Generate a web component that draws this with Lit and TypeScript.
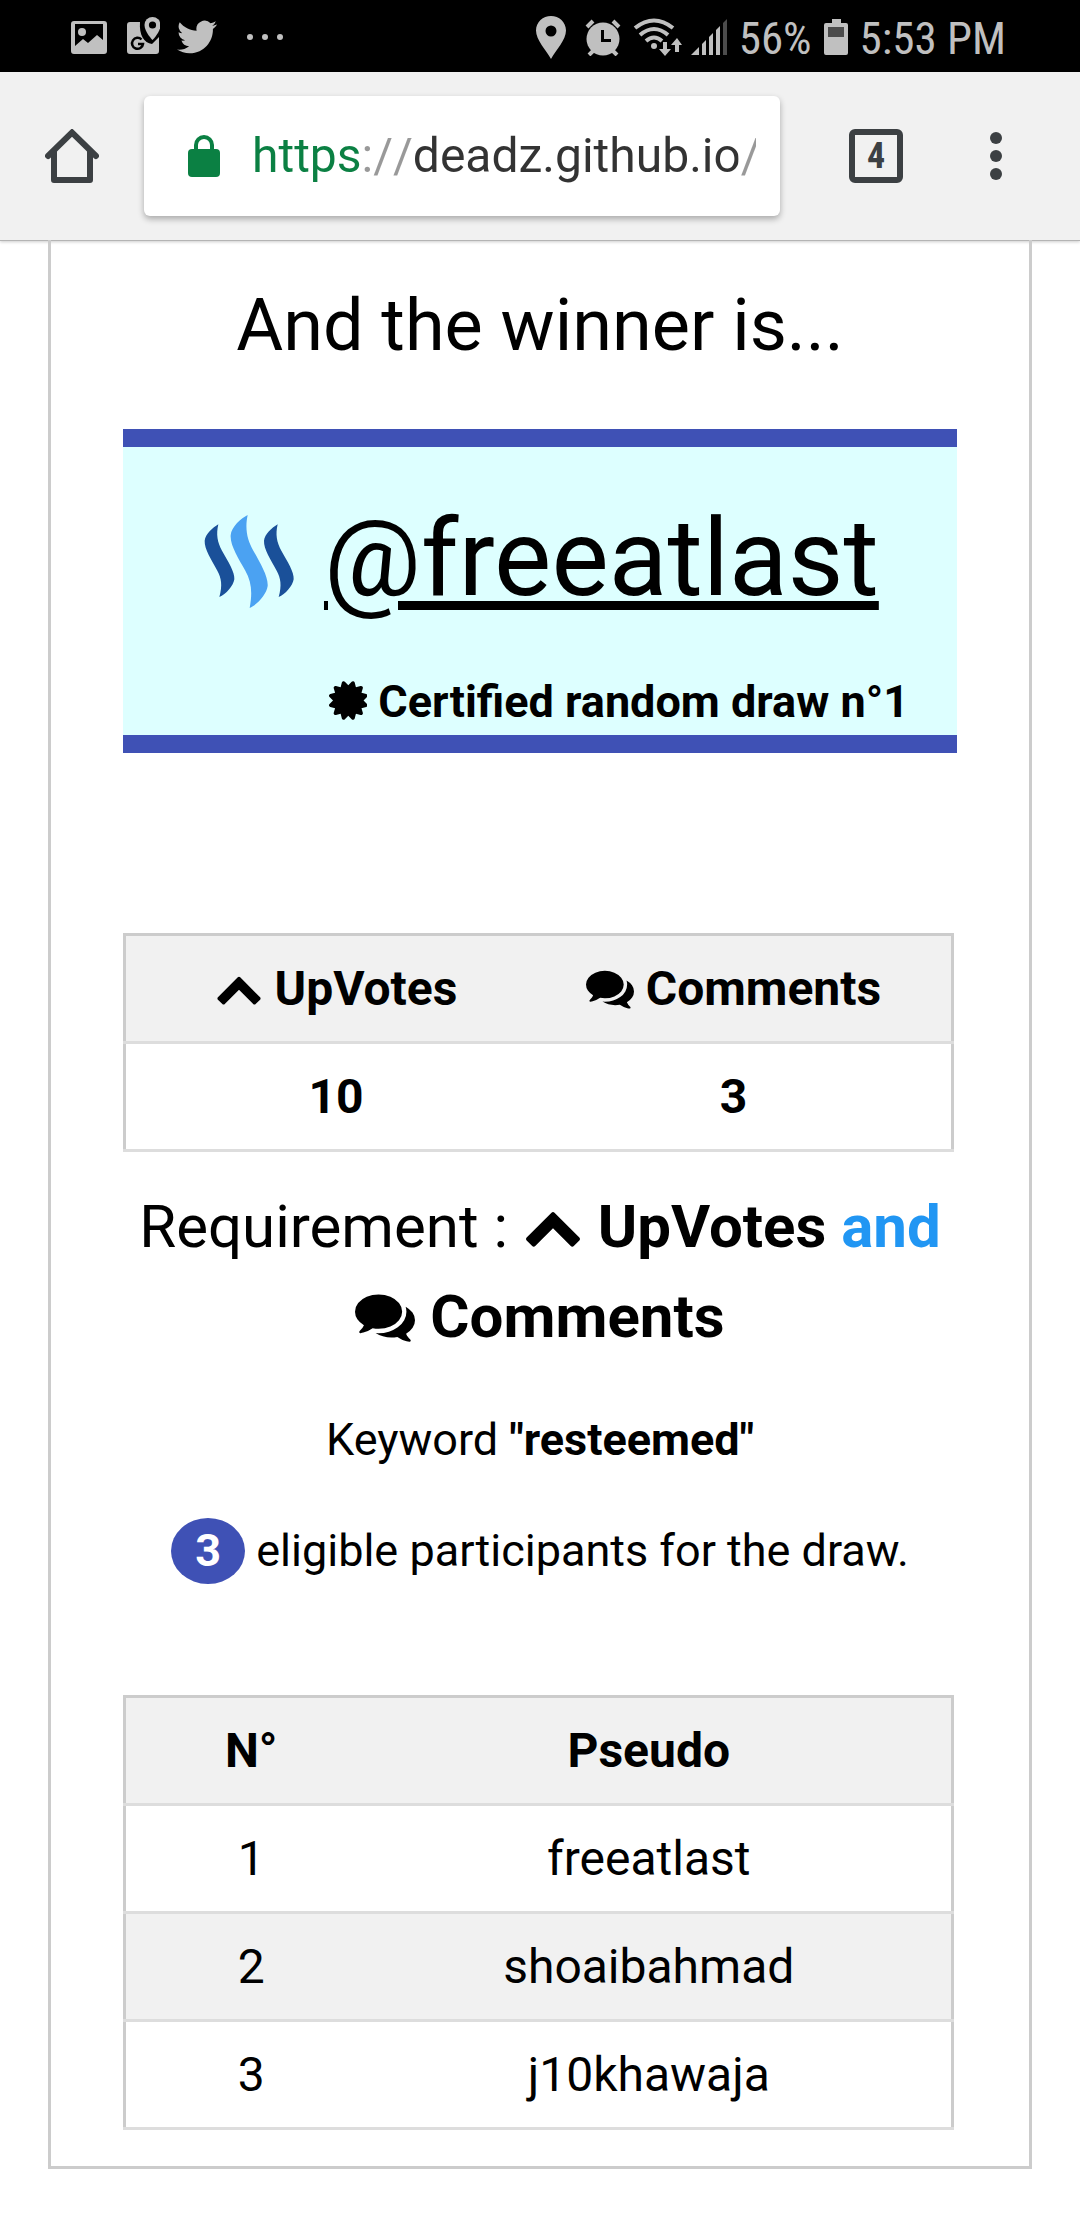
import { LitElement, html, css, svg } from "lit";
import { customElement } from "lit/decorators.js";

const chevronUp = html`<svg class="fa" viewBox="0 0 1792 1792" aria-hidden="true">
  <path d="M1683 1331l-166 165q-19 19-45 19t-45-19l-531-531-531 531q-19 19-45 19t-45-19l-166-165q-19-19-19-45.5t19-45.5l742-741q19-19 45-19t45 19l742 741q19 19 19 45.5t-19 45.5z"/>
</svg>`;

const comments = html`<svg class="fa" viewBox="0 0 1792 1792" aria-hidden="true">
  <path d="M1408 768q0 139-94 257t-256.5 186.5-353.5 68.5q-86 0-176-16-124 88-278 128-36 9-86 16h-3q-11 0-20.5-8t-11.5-21q-1-3-1-6.5t.5-6.5 2-6l2.5-5 3.5-5.5 4-5 4.5-5 4-4.5q5-6 23-25t26-29.5 22.5-29 25-38.5 20.5-44q-124-72-195-177t-71-224q0-139 94-257t256.5-186.5 353.5-68.5 353.5 68.5 256.5 186.5 94 257zm384 256q0 120-71 224.5t-195 176.5q10 24 20.5 44t25 38.5 22.5 29 26 29.5 23 25q1 1 4 4.5t4.5 5 4 5 3.5 5.5l2.5 5 2 6 .5 6.5-1 6.5q-3 14-13 22t-22 7q-50-7-86-16-154-40-278-128-90 16-176 16-271 0-472-132 58 4 88 4 161 0 309-45t264-129q125-92 192-212t67-254q0-77-23-152 129 71 204 178t75 230z"/>
</svg>`;

const certificate = html`<svg class="fa fa-narrow" viewBox="128 0 1536 1792" aria-hidden="true">
  <path d="M1504 896l138 135q30 28 20 70-12 41-52 51l-188 48 53 186q12 41-19 70-29 31-70 19l-186-53-48 188q-10 40-51 52-12 2-19 2-31 0-51-22l-135-138-135 138q-28 30-70 20-41-11-51-52l-48-188-186 53q-41 12-70-19-31-29-19-70l53-186-188-48q-40-10-52-51-10-42 20-70l138-135-138-135q-30-28-20-70 12-41 52-51l188-48-53-186q-12-41 19-70 29-31 70-19l186 53 48-188q10-41 51-51 41-12 70 19l135 139 135-139q29-30 70-19 41 10 51 51l48 188 186-53q41-12 70 19 31 29 19 70l-53 186 188 48q40 10 52 51 10 42-20 70z"/>
</svg>`;

const outerStrand = "M55 45C38 55 16 75 14 94C13 120 34 150 52 184C64 206 68 228 58 263C78 255 100 230 103 210C105 188 84 156 66 124C52 98 48 76 55 45Z";
const middleStrand = "M143 17C124 26 94 52 92 78C90 108 116 148 136 184C154 216 158 248 149 296C172 286 200 254 203 230C205 202 180 160 160 124C142 92 134 60 143 17Z";

@customElement("status-bar")
export class StatusBar extends LitElement {
  static styles = css`
    :host {
      display: flex;
      align-items: center;
      justify-content: space-between;
      box-sizing: border-box;
      height: 72px;
      padding: 2px 74px 0 71px;
      background: #000;
      color: #c0c0c0;
      font: 45px/60px "Roboto Condensed", Roboto, "Liberation Sans", sans-serif;
    }
    svg { display: block; fill: currentColor; }
    span { padding-top: 4px; }
    .left, .right { display: flex; align-items: center; }
    .left { gap: 17px; }
    .more { margin-left: 13px; }
    .right { gap: 12px; }
    .network { display: flex; gap: 8px; }
    .dim { fill: #4c4c4c; }
    .line { fill: none; stroke: currentColor; }
  `;

  render() {
    return html`
      <div class="left">
        <svg width="36" height="44" viewBox="0 0 36 44" role="img" aria-label="Picture">
          <path fill-rule="evenodd" d="M3 6H33Q36 6 36 9V36Q36 39 33 39H3Q0 39 0 36V9Q0 6 3 6ZM4 9V31L12 24L17 28L26 20L32 25V9Z"/>
          <circle cx="11" cy="17" r="4"/>
        </svg>
        <svg width="36" height="44" viewBox="0 0 36 44" role="img" aria-label="Maps">
          <path d="M6 7H16C15 20 20 28 28 29L35 22V36Q35 39 32 39H6Q3 39 3 36V10Q3 7 6 7Z"/>
          <path stroke="#000" stroke-width="3" paint-order="stroke" fill-rule="evenodd" d="M28.500 2A8 8 0 0 1 36.500 10C36.500 17 28.500 25 28.500 25S20.500 17 20.500 10A8 8 0 0 1 28.500 2Z"/>
          <circle cx="28.500" cy="10" r="3.600" fill="#000"/>
          <path fill="none" stroke="#000" stroke-width="2.500" d="M17.500 24.500A5.500 5.500 0 1 0 19 29H14"/>
        </svg>
        <svg width="40" height="44" viewBox="0 0 24 24" preserveAspectRatio="xMidYMid meet" role="img" aria-label="Twitter">
          <path d="M23.950 4.570a10 10 0 0 1-2.820.770 4.960 4.960 0 0 0 2.160-2.720c-.950.550-2 .950-3.120 1.180a4.920 4.920 0 0 0-8.380 4.480C7.690 8.090 4.070 6.130 1.640 3.160a4.920 4.920 0 0 0 1.520 6.570 4.900 4.900 0 0 1-2.230-.610v.060a4.920 4.920 0 0 0 3.950 4.830 5 5 0 0 1-2.210.080 4.940 4.940 0 0 0 4.600 3.420A9.870 9.870 0 0 1 0 19.540a13.990 13.990 0 0 0 7.550 2.210c9.060 0 14-7.500 14-13.980 0-.210 0-.420-.020-.630a9.940 9.940 0 0 0 2.460-2.550z"/>
        </svg>
        <svg class="more" width="36" height="8" viewBox="0 0 36 8" role="img" aria-label="More notifications">
          <circle cx="3" cy="4" r="3"/><circle cx="18" cy="4" r="3"/><circle cx="33" cy="4" r="3"/>
        </svg>
      </div>
      <div class="right">
        <svg width="37" height="44" viewBox="0 0 37 44" role="img" aria-label="Location">
          <path fill-rule="evenodd" d="M15 1C23 1 30 7 30 15.500C30 25 20 35 15 44C10 35 0 25 0 15.500C0 7 7 1 15 1ZM15 10.500A5.500 5.500 0 1 0 15 21.500A5.500 5.500 0 1 0 15 10.500Z"/>
        </svg>
        <svg width="36" height="38" viewBox="0 0 36 38" role="img" aria-label="Alarm">
          <circle cx="18" cy="21" r="16.500"/>
          <path class="line" stroke-width="4" d="M2 9L8 3M34 9L28 3M4 37L9 32M32 37L27 32"/>
          <path fill="none" stroke="#000" stroke-width="3" d="M17.500 12V22.500H26"/>
        </svg>
        <div class="network">
          <svg width="50" height="38" viewBox="0 0 50 38" role="img" aria-label="Wi-Fi">
            <path class="line" stroke-width="4" d="M2 10Q21 -5 40 10M7 17Q21 5 35 17M13 23Q21 16 29 23"/>
            <circle cx="21" cy="28" r="3"/>
            <path d="M30 24H34V31H38L32 38L26 31H30ZM42 34H46V27H49L44 20L38 27H42Z"/>
          </svg>
          <svg width="36" height="38" viewBox="0 0 36 38" role="img" aria-label="Signal">
            <path d="M0 37L8 29V37ZM11 26L15 22V37H11ZM18 19L22 15V37H18ZM25 12L29 8V37H25Z"/>
            <path class="dim" d="M32 5L36 1V37H32Z"/>
          </svg>
        </div>
        <span>56%</span>
        <svg width="24" height="38" viewBox="0 0 24 38" role="img" aria-label="Battery">
          <path d="M8 1H17V5H22Q24 5 24 7V35Q24 37 22 37H2Q0 37 0 35V7Q0 5 2 5H8Z"/>
          <path class="dim" d="M4 9H20V19H4Z"/>
        </svg>
        <span>5:53 PM</span>
      </div>
    `;
  }
}

@customElement("browser-bar")
export class BrowserBar extends LitElement {
  static styles = css`
    :host {
      display: flex;
      align-items: center;
      box-sizing: border-box;
      height: 168px;
      background: #f1f1f1;
      color: #3c4043;
      box-shadow: 0 1px 0 #b4b4b4, 0 2px 3px rgba(0, 0, 0, 0.2);
      font-family: Roboto, "Liberation Sans", sans-serif;
    }
    button {
      display: flex;
      align-items: center;
      justify-content: center;
      height: 120px;
      padding: 0;
      border: 0;
      background: none;
      color: inherit;
      font: inherit;
    }
    .home { width: 144px; }
    .tabs { width: 120px; margin-left: 36px; }
    .menu { width: 120px; margin-right: 24px; }
    .count {
      box-sizing: border-box;
      width: 54px;
      height: 54px;
      border: 6px solid;
      border-radius: 6px;
      font: 700 36px/42px "Roboto Condensed", Roboto, "Liberation Sans", sans-serif;
      text-align: center;
    }
    .address {
      display: flex;
      flex: 1;
      min-width: 0;
      align-items: center;
      gap: 32px;
      box-sizing: border-box;
      height: 120px;
      padding: 0 24px 0 44px;
      border-radius: 6px;
      background: #fff;
      box-shadow: 0 3px 6px rgba(0, 0, 0, 0.3);
    }
    .lock { flex: none; }
    input {
      flex: 1;
      min-width: 0;
      height: 66px;
      padding: 0;
      border: 0;
      outline: 0;
      color: transparent;
      font: 48px/66px Roboto, "Liberation Sans", sans-serif;
      font-kerning: none;
      background: linear-gradient(90deg, #0b8043 110px, #999 110px 159px, #333 159px 486px, #999 486px);
      -webkit-background-clip: text;
      background-clip: text;
    }
  `;

  render() {
    return html`
      <button class="home" aria-label="Home">
        <svg width="54" height="54" viewBox="0 0 54 54" fill="none" stroke="currentColor" stroke-width="6">
          <path stroke-linecap="round" stroke-linejoin="miter" d="M3 27L27 3.500L51 27"/>
          <path stroke-linejoin="round" d="M9 22V51H45V22"/>
        </svg>
      </button>
      <label class="address">
        <svg class="lock" width="32" height="42" viewBox="0 0 32 42" role="img" aria-label="Secure">
          <rect y="14" width="32" height="28" rx="4" fill="#0b8043"/>
          <path d="M8 16V10A8 8 0 0 1 24 10V16" fill="none" stroke="#0b8043" stroke-width="4"/>
        </svg>
        <input type="text" aria-label="Address" .value=${"https://deadz.github.io/"} />
      </label>
      <button class="tabs" aria-label="Open tabs"><span class="count">4</span></button>
      <button class="menu" aria-label="Menu">
        <svg width="12" height="48" viewBox="0 0 12 48" fill="currentColor">
          <circle cx="6" cy="6" r="6"/><circle cx="6" cy="24" r="6"/><circle cx="6" cy="42" r="6"/>
        </svg>
      </button>
    `;
  }
}

@customElement("app-root")
export class AppRoot extends LitElement {
  static styles = css`
    :host {
      display: block;
      background: #fff;
      color: #000;
      font: 45px/66px Roboto, "Liberation Sans", sans-serif;
      text-align: center;
    }
    h2, h3, h4, p { margin: 0; font-weight: 400; }
    a { color: inherit; }
    .fa {
      width: 1em;
      height: 1em;
      vertical-align: -0.143em;
      fill: currentColor;
    }
    .fa-narrow { width: 0.857em; }
    .card {
      margin: 0 48px 48px;
      padding: 32px 72px 36px;
      border: 3px solid #ccc;
      border-top: 0;
    }
    .title { font-size: 72px; line-height: 108px; }
    .winner {
      margin-top: 49px;
      border: 18px solid #3f51b5;
      border-width: 18px 0;
      background: #ddffff;
    }
    .name { padding: 30px 0; font-size: 108px; line-height: 162px; }
    .name a {
      text-decoration-thickness: 9px;
      text-underline-offset: 6px;
    }
    .logo {
      width: 96px;
      height: 96px;
      overflow: visible;
      vertical-align: middle;
    }
    .certified { padding-right: 48px; font-weight: 700; text-align: right; }
    .grid {
      width: calc(100% - 3px);
      table-layout: fixed;
      border-collapse: collapse;
      border: 3px solid #ccc;
      font-size: 48px;
      line-height: 57px;
    }
    .grid tr { border-bottom: 3px solid #ddd; background: #fff; }
    .grid tr.shade { background: #f1f1f1; }
    .grid th, .grid td { box-sizing: border-box; padding: 24px; }
    .grid th:first-child, .grid td:first-child { padding-left: 48px; }
    .grid th:last-child, .grid td:last-child { padding-right: 30px; }
    .totals { margin-top: 180px; }
    .totals td { font-weight: 700; }
    .half { width: 48%; }
    .number { width: 228px; }
    .requirement { margin-top: 30px; font-size: 60px; line-height: 90px; }
    .and { color: #2196f3; }
    .keyword { margin-top: 45px; }
    .eligible { margin-top: 45px; }
    .badge {
      display: inline-block;
      padding: 0 24px;
      border-radius: 50%;
      background: #3f51b5;
      color: #fff;
      font-weight: 700;
    }
    .players { margin-top: 111px; }
  `;

  private players = ["freeatlast", "shoaibahmad", "j10khawaja"];

  render() {
    return html`
      <status-bar></status-bar>
      <browser-bar></browser-bar>
      <main class="card">
        <h2 class="title">And the winner is...</h2>
        <section class="winner">
          <h3 class="name">
            <svg class="logo" viewBox="3 26 288 288" role="img" aria-label="Steem">
              ${svg`
                <path fill="#1a5099" d=${outerStrand}/>
                <path fill="#4ba2f2" d=${middleStrand}/>
                <path fill="#1a5099" transform="translate(178 0)" d=${outerStrand}/>
              `}
            </svg>
            <a href="#freeatlast">@freeatlast</a>
          </h3>
          <p class="certified">${certificate} Certified random draw n°1</p>
        </section>
        <table class="grid totals">
          <tr class="shade">
            <th class="half">${chevronUp} UpVotes</th>
            <th>${comments} Comments</th>
          </tr>
          <tr><td>10</td><td>3</td></tr>
        </table>
        <h4 class="requirement">
          Requirement : <b>${chevronUp} UpVotes</b> <b class="and">and</b>
          <b>${comments} Comments</b>
        </h4>
        <p class="keyword">Keyword <b>"resteemed"</b></p>
        <p class="eligible"><span class="badge">3</span> eligible participants for the draw.</p>
        <table class="grid players">
          <tr class="shade"><th class="number">N°</th><th>Pseudo</th></tr>
          ${this.players.map(
            (name, i) => html`<tr class=${i % 2 ? "shade" : ""}><td>${i + 1}</td><td>${name}</td></tr>`
          )}
        </table>
      </main>
    `;
  }
}
